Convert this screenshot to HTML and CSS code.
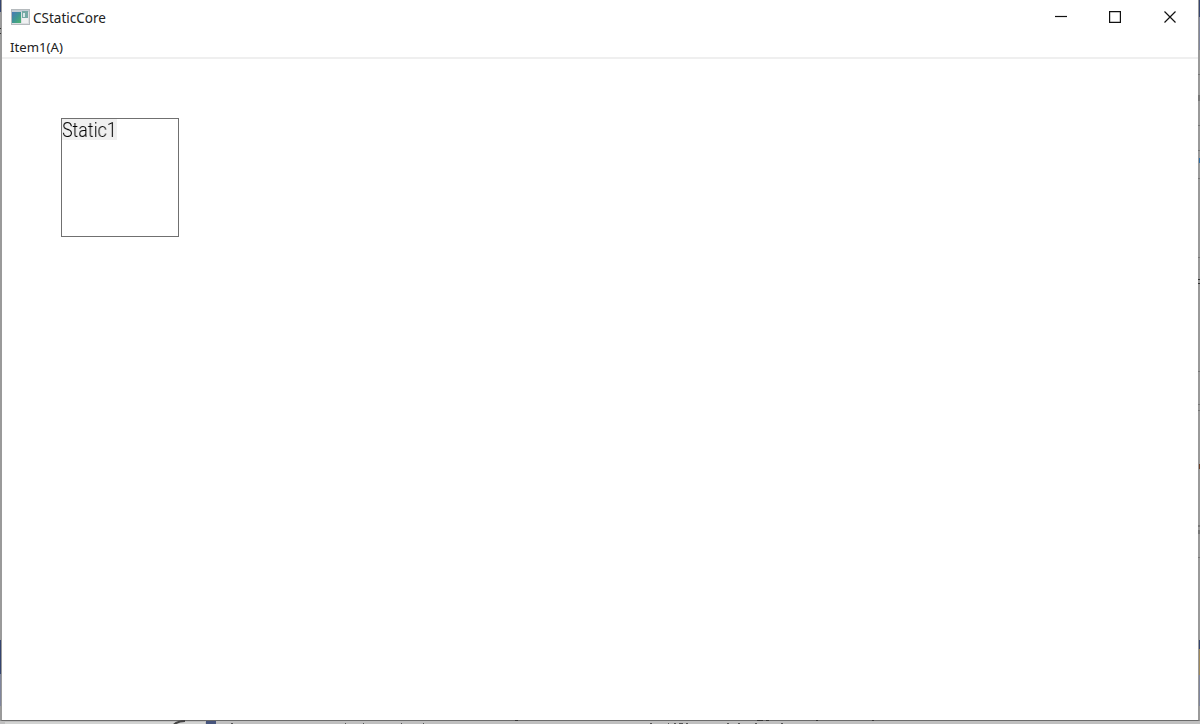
FILE: index.html
```html
<!DOCTYPE html>
<html lang="en">

<head>
    <meta charset="UTF-8">
    <title>CStaticCore</title>
    <link rel="stylesheet" href="styles.css">
</head>

<body>
    <!-- Main window -->
    <div class="window">
        <div class="titlebar">
            <svg class="app-icon" width="19" height="16" viewBox="0 0 19 16">
                <defs>
                    <linearGradient id="pane" x1="0" y1="0" x2="1" y2="1">
                        <stop offset="0" stop-color="#4a78b8"/>
                        <stop offset="0.5" stop-color="#3e9694"/>
                        <stop offset="1" stop-color="#4fb56c"/>
                    </linearGradient>
                </defs>
                <rect x="0.5" y="0.5" width="18" height="15" fill="#dcdfe2" stroke="#b5babd"/>
                <rect x="1" y="1" width="17" height="2" fill="#c3cdd5"/>
                <rect x="1" y="3" width="9" height="11" fill="url(#pane)"/>
                <rect x="11" y="2" width="6" height="7" fill="#76a9a5"/>
                <rect x="12" y="4" width="2" height="4" fill="#d8e8e8"/>
                <rect x="11" y="9" width="6" height="5" fill="#f0f1f2"/>
            </svg>
            <span class="title">CStaticCore</span>
            <div class="buttons">
                <svg width="12" height="12" viewBox="0 0 12 12"><path d="M0 5.5H12"/></svg>
                <svg width="12" height="12" viewBox="0 0 12 12"><path d="M0.6 0.6H11.4V11.4H0.6Z"/></svg>
                <svg width="12" height="12" viewBox="0 0 12 12"><path d="M0.5 0.5L11.5 11.5M11.5 0.5L0.5 11.5"/></svg>
            </div>
        </div>
        <div class="menubar">
            <span class="menu-item">Item1(A)</span>
        </div>
        <div class="client">
            <div class="static-box"><div class="static-label"><span class="static-text">Static1</span></div></div>
        </div>
    </div>

    <!-- Desktop seen around the window -->
    <svg class="edges" width="1200" height="724" viewBox="0 0 1200 724">
        <path fill="#35456f" d="M0 0H1V12H0ZM0 640H1V674H0ZM1199 0H1200V17H1199ZM1199 640H1200V649H1199Z"/>
        <path fill="#7f859c" d="M0 674H1V706H0ZM1199 17H1200V50H1199ZM1199 675H1200V706H1199Z"/>
        <path fill="#a08a5c" d="M1199 649H1200V675H1199Z"/>
        <path fill="#2b6da8" d="M1199 158H1200V163H1199Z"/>
        <path fill="#6b3f28" d="M1199 464H1200V469H1199Z"/>
        <path fill="#333" d="M0 28H1V29H0ZM0 33H1V34H0ZM1198 279H1200V280H1198ZM1198 283H1200V284H1198Z"/>
        <path fill="#777" d="M1198 74H1200V75H1198ZM1198 95H1200V101H1198ZM1198 125H1200V126H1198ZM1198 150H1200V151H1198ZM1198 178H1200V179H1198ZM1198 257H1200V258H1198ZM1198 371H1200V372H1198ZM1198 404H1200V405H1198ZM1198 410H1200V411H1198ZM1198 525H1200V527H1198ZM1198 530H1200V534H1198ZM1198 557H1200V558H1198Z"/>
        <path fill="#d2d3d2" d="M5 722H205V724H5Z"/>
        <path fill="#46547c" d="M206 721H216V724H206Z"/>
        <path fill="none" stroke="#444" stroke-width="2" d="M174 724.5Q178 721 185 721"/>
        <path fill="#555" d="M231 723H233V724H231ZM345 723H346V724H345ZM363 723H364V724H363ZM401 723H402V724H401ZM423 723H424V724H423ZM650 723H652V724H650ZM668 723H669V724H668ZM674 723H676V724H674ZM679 723H683V724H679ZM686 723H688V724H686ZM727 723H729V724H727ZM738 723H740V724H738ZM755 723H757V724H755ZM781 723H783V724H781Z"/>
        <path fill="#333" d="M515 720H518V721H515ZM757 720H763V721H757ZM766 720H769V721H766ZM816 720H818V721H816ZM872 720H874V721H872Z"/>
    </svg>
</body>

</html>
```
FILE: styles.css
```css
body {
    margin: 0;
    height: 724px;
    overflow: hidden;
    background-color: #bfbfbf;
    font-family: "Noto Sans", "Open Sans", sans-serif;
    color: #222;
}

.window {
    display: flex;
    flex-direction: column;
    box-sizing: border-box;
    height: 721px;
    border: solid #9a9a9a;
    border-width: 0 2px 1px;
    border-bottom-color: #6a6a6a;
    background-color: #fff;
}

.titlebar {
    display: flex;
    align-items: center;
    height: 34px;
    padding: 0 22px 0 9px;
}

.app-icon {
    margin-right: 3px;
}

.title {
    padding-top: 2px;
    font-size: 13.5px;
}

.buttons {
    display: flex;
    gap: 42px;
    margin-left: auto;
}

.buttons svg:last-child {
    margin-left: 1px;
}

.buttons path {
    fill: none;
    stroke: #111;
    stroke-width: 1.2;
}

.menubar {
    display: flex;
    align-items: center;
    height: 23px;
    padding: 0 8px;
    border-bottom: 2px solid #efefef;
    font-size: 13.2px;
}

.menu-item {
    padding-top: 2px;
}

.client {
    flex: 1;
    padding: 59px 0 0 59px;
}

.static-box {
    width: 116px;
    height: 117px;
    border: 1px solid #707070;
}

.static-label {
    width: 55px;
    height: 21px;
    background-color: #f0f0f0;
}

.static-text {
    display: inline-block;
    font-family: Roboto, sans-serif;
    font-size: 20px;
    font-weight: 300;
    line-height: 23px;
    color: #000;
    transform: scaleX(0.89);
    transform-origin: left;
    will-change: transform;
}

/* slivers of the desktop behind the window */
.edges {
    position: absolute;
    top: 0;
    left: 0;
}
```
